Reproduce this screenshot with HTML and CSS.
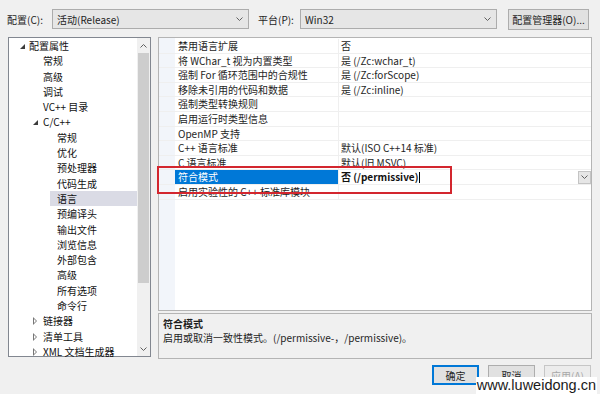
FILE: index.html
```html
<!DOCTYPE html>
<html>
  <head>
    <meta charset="UTF-8">
    <link rel="stylesheet" href="styles.css">
  </head>
  <body>
    <div class="toolbar">
      <span class="label label-config">配置(C):</span>
      <div class="combo combo-config">
        <span>活动(Release)</span>
        <svg class="chevron" width="7" height="4" viewBox="0 0 7 4"><polyline points="0.5,0.5 3.5,3.5 6.5,0.5" /></svg>
      </div>
      <span class="label label-platform">平台(P):</span>
      <div class="combo combo-platform">
        <span>Win32</span>
        <svg class="chevron" width="7" height="4" viewBox="0 0 7 4"><polyline points="0.5,0.5 3.5,3.5 6.5,0.5" /></svg>
      </div>
      <button class="btn btn-manager">配置管理器(O)...</button>
    </div>

    <div class="content">
      <div class="tree">
        <ul>
          <li class="lv0 open">配置属性</li>
          <li class="lv1">常规</li>
          <li class="lv1">高级</li>
          <li class="lv1">调试</li>
          <li class="lv1">VC++ 目录</li>
          <li class="lv1 open">C/C++</li>
          <li class="lv2">常规</li>
          <li class="lv2">优化</li>
          <li class="lv2">预处理器</li>
          <li class="lv2">代码生成</li>
          <li class="lv2 sel">语言</li>
          <li class="lv2">预编译头</li>
          <li class="lv2">输出文件</li>
          <li class="lv2">浏览信息</li>
          <li class="lv2">外部包含</li>
          <li class="lv2">高级</li>
          <li class="lv2">所有选项</li>
          <li class="lv2">命令行</li>
          <li class="lv1 closed">链接器</li>
          <li class="lv1 closed">清单工具</li>
          <li class="lv1 closed">XML 文档生成器</li>
        </ul>
        <div class="scrollbar">
          <div class="sb-arrow">
            <svg width="7" height="4" viewBox="0 0 7 4"><polyline points="0.5,3.5 3.5,0.5 6.5,3.5" /></svg>
          </div>
          <div class="sb-thumb"></div>
          <div class="sb-space"></div>
          <div class="sb-arrow">
            <svg width="7" height="4" viewBox="0 0 7 4"><polyline points="0.5,0.5 3.5,3.5 6.5,0.5" /></svg>
          </div>
        </div>
      </div>

      <div class="right">
        <div class="grid">
          <div class="row"><i></i><span class="name">禁用语言扩展</span><span class="value">否</span></div>
          <div class="row"><i></i><span class="name">将 WChar_t 视为内置类型</span><span class="value">是 (/Zc:wchar_t)</span></div>
          <div class="row"><i></i><span class="name">强制 For 循环范围中的合规性</span><span class="value">是 (/Zc:forScope)</span></div>
          <div class="row"><i></i><span class="name">移除未引用的代码和数据</span><span class="value">是 (/Zc:inline)</span></div>
          <div class="row"><i></i><span class="name">强制类型转换规则</span><span class="value"></span></div>
          <div class="row"><i></i><span class="name">启用运行时类型信息</span><span class="value"></span></div>
          <div class="row"><i></i><span class="name">OpenMP 支持</span><span class="value"></span></div>
          <div class="row"><i></i><span class="name">C++ 语言标准</span><span class="value">默认(ISO C++14 标准)</span></div>
          <div class="row"><i></i><span class="name">C 语言标准</span><span class="value">默认(旧 MSVC)</span></div>
          <div class="row active">
            <i></i>
            <span class="name">符合模式</span>
            <span class="value"><b>否 (/permissive)</b><em class="caret"></em>
              <span class="drop"><svg width="7" height="4" viewBox="0 0 7 4"><polyline points="0.5,0.5 3.5,3.5 6.5,0.5" /></svg></span>
            </span>
          </div>
          <div class="row"><i></i><span class="name">启用实验性的 C++ 标准库模块</span><span class="value"></span></div>
          <div class="mark"></div>
        </div>
        <div class="desc">
          <div class="desc-title">符合模式</div>
          <div class="desc-text">启用或取消一致性模式。(/permissive-，/permissive)。</div>
        </div>
      </div>
    </div>

    <div class="footer">
      <button class="btn btn-ok">确定</button>
      <button class="btn">取消</button>
      <button class="btn" disabled>应用(A)</button>
    </div>

    <div class="watermark">www.luweidong.cn</div>
  </body>
</html>
```

FILE: styles.css
```css
html, body {
  width: 600px;
  height: 394px;
  margin: 0;
  padding: 0;
  overflow: hidden;
  background: #f0f0f0;
  font-family: "Noto Sans CJK SC", sans-serif;
  font-size: 10px;
  color: #1e1e1e;
}
* {
  box-sizing: border-box;
}
svg polyline {
  fill: none;
  stroke: #606060;
  stroke-width: 1;
}

/* top bar */
.toolbar {
  display: flex;
  align-items: center;
  height: 37px;
  padding: 1px 0 0 7px;
}
.label-config {
  width: 45px;
}
.label-platform {
  width: 42px;
  margin-left: 9px;
}
.combo {
  display: flex;
  align-items: center;
  justify-content: space-between;
  width: 197px;
  height: 20px;
  padding: 0 5px 0 4px;
  border: 1px solid #acacac;
  background: #e6e6e6;
}
.btn {
  height: 20px;
  padding: 0;
  border: 1px solid #adadad;
  background: #e1e1e1;
  font-family: inherit;
  font-size: 10px;
  color: #1e1e1e;
}
.btn-manager {
  width: 81px;
  margin-left: 11px;
  height: 21px;
}

/* main area */
.content {
  display: flex;
  height: 322px;
  margin-left: 8px;
}
.tree {
  display: flex;
  width: 143px;
  height: 320px;
  border: 1px solid #828790;
  background: #fff;
}
.tree ul {
  flex: 1;
  margin: 0;
  padding: 0;
  list-style: none;
}
.tree li {
  position: relative;
  height: 15.3px;
  line-height: 15.3px;
  white-space: nowrap;
  color: #111;
}
.tree .lv0 { padding-left: 20px; }
.tree .lv1 { padding-left: 34px; }
.tree .lv2 { padding-left: 48px; }
.tree .sel {
  background: linear-gradient(to right, transparent 41px, #dadbe5 41px);
}
.tree .open::before {
  content: '';
  position: absolute;
  top: 6px;
  width: 0;
  height: 0;
  border-left: 5px solid transparent;
  border-bottom: 5px solid #3c3c3c;
}
.tree .lv0.open::before { left: 11px; }
.tree .lv1.open::before { left: 24px; }
.tree .closed::before {
  content: '';
  position: absolute;
  left: 24px;
  top: 4px;
  width: 0;
  height: 0;
  border-top: 4px solid transparent;
  border-bottom: 4px solid transparent;
  border-left: 4px solid #777;
}
.tree .closed::after {
  content: '';
  position: absolute;
  left: 25px;
  top: 6px;
  width: 0;
  height: 0;
  border-top: 2px solid transparent;
  border-bottom: 2px solid transparent;
  border-left: 2px solid #fff;
}
.scrollbar {
  display: flex;
  flex-direction: column;
  width: 13px;
  background: #f0f0f0;
}
.sb-arrow {
  display: flex;
  align-items: center;
  justify-content: center;
  height: 15px;
}
.sb-thumb {
  height: 230px;
  margin: 0 1px;
  background: #cdcdcd;
}
.sb-space {
  flex: 1;
}

/* property grid */
.right {
  display: flex;
  flex-direction: column;
  width: 434px;
  margin-left: 7px;
}
.grid {
  position: relative;
  height: 275px;
  padding-top: 1px;
  border: 1px solid #b4b4b4;
  background: linear-gradient(to right, #f2f5fa 16px, #fff 16px);
}
.row {
  display: grid;
  grid-template-columns: 16px 164px 1fr;
  height: 14.6px;
  line-height: 13.6px;
  border-bottom: 1px solid #efefef;
  white-space: nowrap;
}
.row .name {
  padding-left: 3px;
  border-right: 1px solid #efefef;
  overflow: hidden;
}
.row .value {
  display: flex;
  align-items: center;
  padding-left: 2px;
}
.row.active .name {
  background: #0078d7;
  color: #fff;
}
.row.active b {
  font-weight: bold;
  color: #111;
}
.caret {
  width: 1px;
  height: 11px;
  margin-left: 1px;
  background: #000;
}
.drop {
  display: flex;
  align-items: center;
  justify-content: center;
  width: 13px;
  height: 13px;
  margin-left: auto;
  margin-right: 0;
  border: 1px solid #c4c4c4;
  background: #e6e6e6;
}
.mark {
  position: absolute;
  left: -2px;
  top: 128px;
  width: 295px;
  height: 28px;
  border: 2px solid #d3262e;
}
.desc {
  height: 46px;
  margin-top: 2px;
  padding: 3px 4px;
  border: 1px solid #b4b4b4;
  background: #f0f0f0;
  line-height: 14px;
}
.desc-title {
  font-weight: bold;
}

/* bottom buttons */
.footer {
  display: flex;
  justify-content: flex-end;
  gap: 9px;
  margin-top: 6px;
  padding-right: 9px;
}
.footer .btn {
  width: 47px;
  height: 20px;
}
.footer .btn-ok {
  border: 1px solid #0078d7;
  box-shadow: inset 0 0 0 1px #0078d7;
}
.footer .btn[disabled] {
  color: #a8a8a8;
  background: #ececec;
  border-color: #c6c6c6;
}
.watermark {
  position: absolute;
  right: 3px;
  bottom: 0;
  padding: 0 1px;
  background: #fff;
  font-family: "Liberation Sans", Arial, sans-serif;
  font-size: 14.5px;
  line-height: 17px;
  color: #1a1a1a;
}
```
